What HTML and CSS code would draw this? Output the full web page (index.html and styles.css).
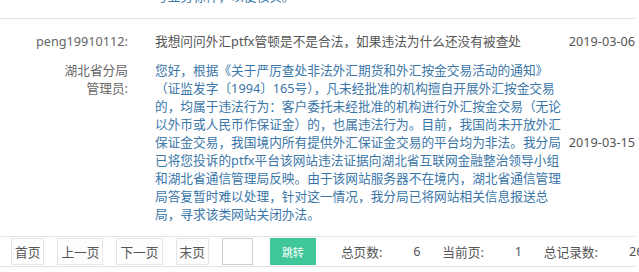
FILE: index.html
```html
<!DOCTYPE html>
<html lang="zh-CN">
<head>
  <meta charset="UTF-8" />
  <meta name="viewport" content="width=device-width, initial-scale=1.0" />
  <title>投诉回复</title>
  <link rel="stylesheet" href="styles.css">
</head>
<body>
  <div class="board">
    <div class="entry">
      <div class="row">
        <div class="who"></div>
        <div class="reply-text">号业务标件，以便核实。</div>
        <div class="when"></div>
      </div>
    </div>

    <div class="entry">
      <div class="row ask">
        <div class="who">peng19910112:</div>
        <div class="ask-text">我想问问外汇ptfx管顿是不是合法，如果违法为什么还没有被查处</div>
        <div class="when">2019-03-06</div>
      </div>
      <div class="row answer">
        <div class="who">湖北省分局<br>管理员:</div>
        <div class="reply-text">
          您好，根据《关于严厉查处非法外汇期货和外汇按金交易活动的通知》<br>
          （证监发字〔1994〕165号），凡未经批准的机构擅自开展外汇按金交易<br>
          的，均属于违法行为：客户委托未经批准的机构进行外汇按金交易（无论<br>
          以外币或人民币作保证金）的，也属违法行为。目前，我国尚未开放外汇<br>
          保证金交易，我国境内所有提供外汇保证金交易的平台均为非法。我分局<br>
          已将您投诉的ptfx平台该网站违法证据向湖北省互联网金融整治领导小组<br>
          和湖北省通信管理局反映。由于该网站服务器不在境内，湖北省通信管理<br>
          局答复暂时难以处理，针对这一情况，我分局已将网站相关信息报送总<br>
          局，寻求该类网站关闭办法。
        </div>
        <div class="when">2019-03-15</div>
      </div>
    </div>

    <div class="pager">
      <button class="pg-btn">首页</button>
      <button class="pg-btn">上一页</button>
      <button class="pg-btn">下一页</button>
      <button class="pg-btn">末页</button>
      <input class="pg-input" type="text">
      <button class="pg-go">跳转</button>
      <div class="stats">
        <span class="stat-label">总页数:</span><span class="stat-value">6</span>
        <span class="stat-label">当前页:</span><span class="stat-value">1</span>
        <span class="stat-label">总记录数:</span><span class="stat-value">26</span>
      </div>
    </div>
  </div>
</body>
</html>
```

FILE: styles.css
```css
body {
  margin: 0;
  font-family: "Noto Sans", "Noto Sans CJK SC", sans-serif;
  font-size: 12.7px;
  color: #333;
  background: #fff;
  overflow: hidden;
}

.board {
  width: 635px;
  margin-top: -26px;
}

.entry {
  padding: 13px 0;
  border-bottom: 1px solid #e4e4e4;
}

.row {
  display: grid;
  grid-template-columns: 128px minmax(0, 1fr) auto;
  column-gap: 27px;
  line-height: 18px;
}

.who {
  text-align: right;
  color: #666;
}

.when {
  text-align: right;
  color: #555;
  align-self: center;
  white-space: nowrap;
}

.ask-text {
  color: #555;
  white-space: nowrap;
}

.answer {
  margin-top: 11px;
}

.answer .who {
  align-self: start;
}

.reply-text {
  color: #3a76a8;
  white-space: nowrap;
}

.pager {
  display: flex;
  align-items: center;
  padding: 1px 0 1px 11px;
  border-bottom: 1px solid #e4e4e4;
  white-space: nowrap;
}

.pager > * {
  flex-shrink: 0;
}

.pg-btn {
  height: 27px;
  box-sizing: border-box;
  margin: 0 13px 0 0;
  padding: 0 3px;
  border: 1px solid #e6e6e6;
  background: #fdfdfd;
  color: #555;
  font-family: inherit;
  font-size: 12.7px;
}

.pg-input {
  width: 31px;
  height: 27px;
  box-sizing: border-box;
  margin: 0 17px 0 0;
  padding: 0;
  border: 1px solid #cfcfcf;
  background: #fff;
}

.pg-go {
  width: 46px;
  height: 27px;
  border: none;
  padding: 0;
  background: #3fc799;
  color: #fff;
  font-family: inherit;
  font-size: 11px;
}

.stats {
  display: flex;
  margin-left: 25px;
  color: #555;
}

.stat-value {
  width: 29px;
  margin-left: 31px;
}
```
